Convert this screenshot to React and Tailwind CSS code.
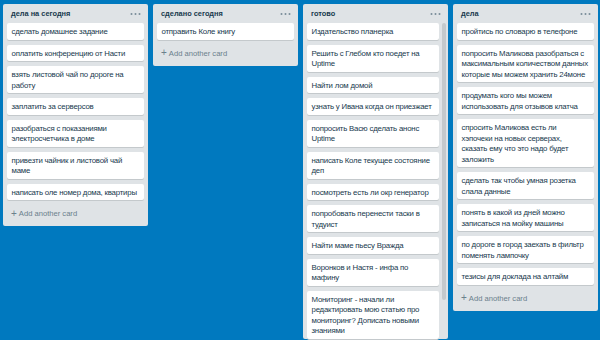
import React from "react";

const lists = [
  {
    title: "дела на сегодня",
    cards: [
      ["сделать домашнее задание"],
      ["оплатить конференцию от Насти"],
      ["взять листовой чай по дороге на", "работу"],
      ["заплатить за серверсов"],
      ["разобраться с показаниями", "электросчетчика в доме"],
      ["привезти чайник и листовой чай", "маме"],
      ["написать оле номер дома, квартиры"],
    ],
    add: true,
  },
  {
    title: "сделано сегодня",
    cards: [["отправить Коле книгу"]],
    add: true,
  },
  {
    title: "готово",
    cards: [
      ["Издательство планерка"],
      ["Решить с Глебом кто поедет на", "Uptime"],
      ["Найти лом домой"],
      ["узнать у Ивана когда он приезжает"],
      ["попросить Васю сделать анонс", "Uptime"],
      ["написать Коле текущее состояние", "деп"],
      ["посмотреть есть ли окр генератор"],
      ["попробовать перенести таски в", "тудуист"],
      ["Найти маме пьесу Вражда"],
      ["Воронков и Настя - инфа по", "мафину"],
      ["Мониторинг - начали ли", "редактировать мою статью про", "мониторинг? Дописать новыми", "знаниями"],
    ],
    add: false,
    scroll: true,
  },
  {
    title: "дела",
    cards: [
      ["пройтись по словарю в телефоне"],
      ["попросить Маликова разобраться с", "максимальным количеством данных", "которые мы можем хранить 24моне"],
      ["продумать кого мы можем", "использовать для отзывов клатча"],
      ["спросить Маликова есть ли", "хэпочеки на новых серверах,", "сказать ему что это надо будет", "заложить"],
      ["сделать так чтобы умная розетка", "слала данные"],
      ["понять в какой из дней можно", "записаться на мойку машины"],
      ["по дороге в город заехать в фильтр", "поменять лампочку"],
      ["тезисы для доклада на алтайм"],
    ],
    add: true,
  },
];

function Dots() {
  return (
    <svg width="11" height="4" viewBox="0 0 11 4" className="block">
      <circle cx="1.5" cy="2" r="1" fill="#798d99" />
      <circle cx="5.5" cy="2" r="1" fill="#798d99" />
      <circle cx="9.5" cy="2" r="1" fill="#798d99" />
    </svg>
  );
}

function Card({ lines }) {
  return (
    <div className="bg-white rounded-[2px] shadow-[0_1px_0_#c4c9cc] pt-[4px] pb-[2px] px-[4.5px] text-[7.8px] tracking-[-0.2px] leading-[10.5px] text-[#17394d]">
      {lines.map((l, i) => (
        <div key={i} className="whitespace-nowrap">
          {l}
        </div>
      ))}
    </div>
  );
}

function List({ list }) {
  const cards = (
    <div className="flex flex-col gap-[5px] w-full">
      {list.cards.map((c, i) => (
        <Card key={i} lines={c} />
      ))}
    </div>
  );
  return (
    <div className="w-[145px] shrink-0 bg-[#dfe3e6] rounded-[2px] flex flex-col">
      <div className="flex items-center justify-between pt-[5px] pb-[4px] pl-[8px] pr-[7px] h-[19px]">
        <span className="font-bold text-[7.4px] leading-[10px] text-[#17394d]">{list.title}</span>
        <Dots />
      </div>
      {list.scroll ? (
        <div className="flex flex-row pl-[4px] pr-[2px] gap-[3px]">
          <div className="w-[132px]">{cards}</div>
          <div className="w-[4px] h-[277px] rounded-[2px] bg-[#c4c9cc]" />
        </div>
      ) : (
        <div className="px-[4px]">{cards}</div>
      )}
      {list.add && (
        <div className="mt-[6px] mb-[4px] h-[16px] flex items-center pl-[8px] text-[7.6px] text-[#6b808c] gap-[2px]">
          <span className="text-[10px] leading-[10px] -mt-[1px]">+</span>
          <span>Add another card</span>
        </div>
      )}
    </div>
  );
}

export default function App() {
  return (
    <div
      className="w-[600px] h-[340px] overflow-hidden bg-[#0079bf] flex flex-row items-start gap-[5px] pl-[3px] pt-[4px]"
      style={{ fontFamily: '"Liberation Sans", Arial, sans-serif' }}
    >
      {lists.map((l, i) => (
        <List key={i} list={l} />
      ))}
    </div>
  );
}
